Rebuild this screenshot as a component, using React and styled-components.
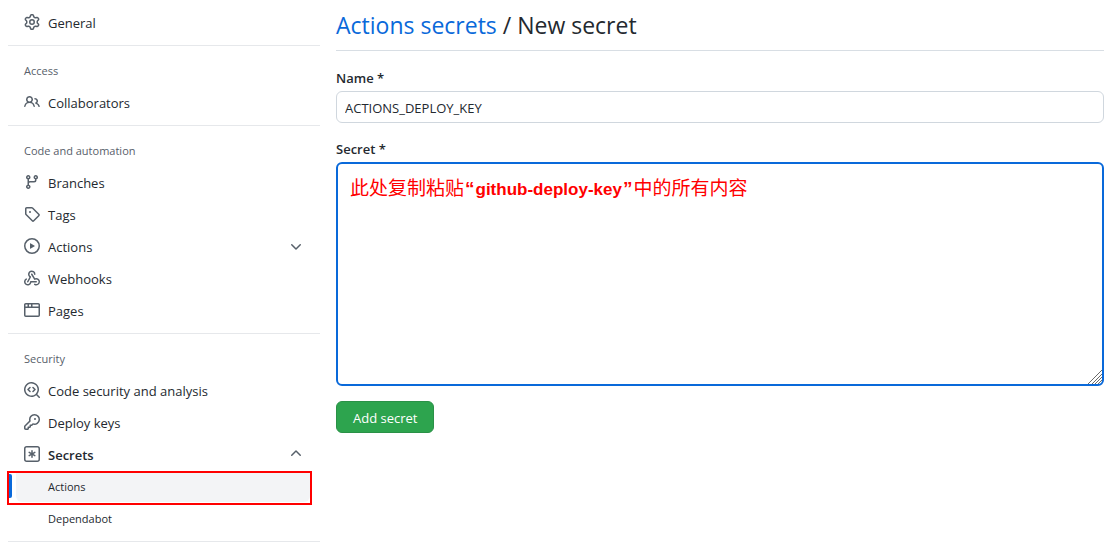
import React from "react";
import styled, { createGlobalStyle, css } from "styled-components";

const Global = createGlobalStyle`
  *, *::before, *::after { box-sizing: border-box; }
  body {
    margin: 0;
    background: #ffffff;
    color: #24292f;
    font-family: "Open Sans", "Noto Sans", "Noto Sans CJK SC", sans-serif;
    font-size: 14px;
    line-height: 20px;
  }
`;

const Page = styled.div`
  display: flex;
  align-items: flex-start;
  gap: 16px;
  padding: 0 10px 0 8px;
`;

const Sidebar = styled.nav`
  flex: 0 0 312px;
  padding-top: 6px;
`;

const Section = styled.section`
  padding-bottom: 7px;
  margin-bottom: 7px;
  border-bottom: 1px solid #e6e8eb;
`;

const SectionTitle = styled.h2`
  margin: 0;
  padding: 9px 16px 6px;
  color: #57606a;
  font-size: 11px;
  font-weight: 500;
  line-height: 18px;
`;

const List = styled.ul`
  list-style: none;
  margin: 0;
  padding: 0;
`;

const itemStyles = css`
  display: flex;
  align-items: center;
  gap: 8px;
  width: 304px;
  height: 32px;
  padding: 0 8px 0 16px;
  color: #24292f;
  font-family: inherit;
  font-size: 13px;
  font-weight: ${(p) => (p.$strong ? 600 : 400)};
  line-height: 20px;
  text-decoration: none;
  text-align: left;
`;

const NavLink = styled.a`
  ${itemStyles}
`;

const NavToggle = styled.button`
  ${itemStyles}
  border: 0;
  background: none;
  cursor: pointer;
`;

const ItemLabel = styled.span`
  flex: 1;
  padding-top: 2px;
`;

const SubLink = styled.a`
  display: flex;
  align-items: center;
  height: 32px;
  width: 304px;
  padding: 1px 0 0 40px;
  color: #24292f;
  font-size: 11px;
  text-decoration: none;
`;

const CurrentFrame = styled.li`
  display: flex;
  width: 305px;
  height: 34px;
  margin: 1px 0 -3px -1px;
  border: 2px solid #ff0000;
`;

const CurrentMarker = styled.span`
  width: 3px;
  height: 24px;
  margin: 1px 4px 0 0;
  background: #0969da;
  border-radius: 0 2px 2px 0;
`;

const CurrentLink = styled.a`
  flex: 1;
  display: flex;
  align-items: center;
  height: 29px;
  padding: 0 0 2px 32px;
  border-radius: 0 0 6px 6px;
  background: #f3f4f6;
  color: #24292f;
  font-size: 11px;
  text-decoration: none;
`;

const Icon = styled.svg`
  flex: none;
  width: 16px;
  height: 16px;
  fill: #57606a;
`;

const Main = styled.main`
  flex: 1;
  min-width: 0;
`;

const Title = styled.h1`
  margin: 0 0 16px;
  padding: 7px 0;
  border-bottom: 1px solid #d8dee4;
  font-size: 23px;
  font-weight: 400;
  line-height: 36px;
`;

const TitleLink = styled.a`
  color: #0969da;
  text-decoration: none;
`;

const Form = styled.form`
  display: flex;
  flex-direction: column;
  align-items: flex-start;
  gap: 15px;
`;

const Field = styled.div`
  display: flex;
  flex-direction: column;
  width: 100%;
`;

const Label = styled.label`
  padding: 1px 0 2px;
  line-height: 21px;
  font-size: 13px;
  font-weight: 600;
`;

const NameInput = styled.input`
  height: 32px;
  padding: 2px 8px 0;
  border: 1px solid #d0d7de;
  border-radius: 6px;
  outline: 0;
  color: #24292f;
  font-family: inherit;
  font-size: 13px;
`;

const AreaWrap = styled.div`
  position: relative;
`;

const SecretArea = styled.textarea`
  display: block;
  width: 100%;
  height: 224px;
  padding: 12px;
  border: 2px solid #0969da;
  border-radius: 6px;
  outline: 0;
  resize: none;
  color: #24292f;
  font-family: inherit;
  font-size: 13px;
`;

const Annotation = styled.p`
  position: absolute;
  top: 11px;
  left: 14px;
  margin: 0;
  color: #ff0000;
  font-family: "Noto Sans CJK SC", sans-serif;
  font-size: 19px;
  line-height: 28px;
  white-space: nowrap;
  pointer-events: none;
`;

const Quote = styled.span`
  font-family: "Liberation Sans", sans-serif;
  font-weight: 700;
  padding: 0 1px;
`;

const FileName = styled.strong`
  font-family: "Liberation Sans", sans-serif;
  font-size: 17px;
`;

const Grip = styled.svg`
  position: absolute;
  right: 2px;
  bottom: 2px;
  width: 15px;
  height: 15px;
  stroke: #6b6b6b;
  pointer-events: none;
`;

const SubmitButton = styled.button`
  height: 32px;
  padding: 1px 16px 0;
  border: 1px solid #2a9147;
  border-radius: 6px;
  background: #2da44e;
  color: #ffffff;
  font-family: inherit;
  font-size: 13px;
  cursor: pointer;
`;

const icons = {
  gear: "M7.429 1.525a6.593 6.593 0 011.142 0c.036.003.108.036.137.146l.289 1.105c.147.56.55.967.997 1.189.174.086.341.183.501.29.417.278.97.423 1.53.27l1.102-.303c.11-.03.175.016.195.046.219.31.41.641.573.989.014.031.022.11-.059.19l-.815.806c-.411.406-.562.957-.53 1.456a4.588 4.588 0 010 .582c-.032.499.119 1.05.53 1.456l.815.806c.08.08.073.159.059.19a6.494 6.494 0 01-.573.99c-.02.029-.086.074-.195.045l-1.103-.303c-.559-.153-1.112-.008-1.529.27-.16.107-.327.204-.5.29-.449.222-.851.628-.998 1.189l-.289 1.105c-.029.11-.101.143-.137.146a6.613 6.613 0 01-1.142 0c-.036-.003-.108-.037-.137-.146l-.289-1.105c-.147-.56-.55-.967-.997-1.189a4.502 4.502 0 01-.501-.29c-.417-.278-.97-.423-1.53-.27l-1.102.303c-.11.03-.175-.016-.195-.046a6.492 6.492 0 01-.573-.989c-.014-.031-.022-.11.059-.19l.815-.806c.411-.406.562-.957.53-1.456a4.587 4.587 0 010-.582c.032-.499-.119-1.05-.53-1.456l-.815-.806c-.08-.08-.073-.159-.059-.19a6.44 6.44 0 01.573-.99c.02-.029.086-.075.195-.045l1.103.303c.559.153 1.112.008 1.529-.27.16-.107.327-.204.5-.29.449-.222.851-.628.998-1.189l.289-1.105c.029-.11.101-.143.137-.146zM8 0c-.236 0-.47.01-.701.03-.743.065-1.29.615-1.458 1.261l-.29 1.106c-.017.066-.078.158-.211.224a5.994 5.994 0 00-.668.386c-.123.082-.233.09-.3.071L3.27 2.776c-.644-.177-1.392.02-1.82.63a7.977 7.977 0 00-.704 1.217c-.315.675-.111 1.422.363 1.891l.815.806c.05.048.098.147.088.294a6.084 6.084 0 000 .772c.01.147-.038.246-.088.294l-.815.806c-.474.469-.678 1.216-.363 1.891.2.428.436.835.704 1.218.428.609 1.176.806 1.82.63l1.103-.303c.066-.019.176-.011.299.071.213.143.436.272.668.386.133.066.194.158.212.224l.289 1.106c.169.646.715 1.196 1.458 1.26a8.094 8.094 0 001.402 0c.743-.064 1.29-.614 1.458-1.26l.29-1.106c.017-.066.078-.158.211-.224a5.98 5.98 0 00.668-.386c.123-.082.233-.09.3-.071l1.102.302c.644.177 1.392-.02 1.82-.63.268-.382.505-.789.704-1.217.315-.675.111-1.422-.364-1.891l-.814-.806c-.05-.048-.098-.147-.088-.294a6.1 6.1 0 000-.772c-.01-.147.039-.246.088-.294l.814-.806c.475-.469.679-1.216.364-1.891a7.992 7.992 0 00-.704-1.218c-.428-.609-1.176-.806-1.82-.63l-1.103.303c-.066.019-.176.011-.299-.071a5.991 5.991 0 00-.668-.386c-.133-.066-.194-.158-.212-.224L10.16 1.29C9.99.645 9.444.095 8.701.031A8.094 8.094 0 008 0zm1.5 8a1.5 1.5 0 11-3 0 1.5 1.5 0 013 0zM11 8a3 3 0 11-6 0 3 3 0 016 0z",
  people: "M5.5 3.5a2 2 0 100 4 2 2 0 000-4zM2 5.5a3.5 3.5 0 115.898 2.549 5.507 5.507 0 013.034 4.084.75.75 0 11-1.482.235 4.001 4.001 0 00-7.9 0 .75.75 0 01-1.482-.236A5.507 5.507 0 013.102 8.05 3.49 3.49 0 012 5.5zM11 4a.75.75 0 100 1.5 1.5 1.5 0 01.666 2.844.75.75 0 00-.416.672v.352a.75.75 0 00.574.73c1.2.289 2.162 1.2 2.522 2.372a.75.75 0 101.434-.44 5.01 5.01 0 00-2.56-3.012A3 3 0 0011 4z",
  branch: "M11.75 2.5a.75.75 0 100 1.5.75.75 0 000-1.5zm-2.25.75a2.25 2.25 0 113 2.122V6A2.5 2.5 0 0110 8.5H6a1 1 0 00-1 1v1.128a2.251 2.251 0 11-1.5 0V5.372a2.25 2.25 0 111.5 0v1.836A2.492 2.492 0 016 7h4a1 1 0 001-1v-.628A2.25 2.25 0 019.5 3.25zM4.25 12a.75.75 0 100 1.5.75.75 0 000-1.5zM3.5 3.25a.75.75 0 111.5 0 .75.75 0 01-1.5 0z",
  tag: "M2.5 7.775V2.75a.25.25 0 01.25-.25h5.025a.25.25 0 01.177.073l6.25 6.25a.25.25 0 010 .354l-5.025 5.025a.25.25 0 01-.354 0l-6.25-6.25a.25.25 0 01-.073-.177zm-1.5 0V2.75C1 1.784 1.784 1 2.75 1h5.025c.464 0 .91.184 1.238.513l6.25 6.25a1.75 1.75 0 010 2.474l-5.026 5.026a1.75 1.75 0 01-2.474 0l-6.25-6.25A1.75 1.75 0 011 7.775zM6 5a1 1 0 100 2 1 1 0 000-2z",
  play: "M1.5 8a6.5 6.5 0 1113 0 6.5 6.5 0 01-13 0zM8 0a8 8 0 100 16A8 8 0 008 0zM6.379 5.227A.25.25 0 006 5.442v5.117a.25.25 0 00.379.214l4.264-2.559a.25.25 0 000-.428L6.379 5.227z",
  webhook: "M5.5 4.25a2.25 2.25 0 014.5 0 .75.75 0 001.5 0 3.75 3.75 0 10-6.14 2.889l-2.272 4.258a.75.75 0 001.324.706L7 7.25a.75.75 0 00-.309-1.015A2.25 2.25 0 015.5 4.25zM7.364 3.607a.75.75 0 011.03.257l2.608 4.349a3.75 3.75 0 11-.628 6.785.75.75 0 01.752-1.299 2.25 2.25 0 10-.033-3.88.75.75 0 01-1.03-.256L7.107 4.636a.75.75 0 01.257-1.03zM2.9 8.776A.75.75 0 012.625 9.8 2.25 2.25 0 106 11.75a.75.75 0 01.75-.751h5.5a.75.75 0 010 1.5H7.425a3.751 3.751 0 11-5.55-3.998.75.75 0 011.024.274z",
  browser: "M0 2.75C0 1.784.784 1 1.75 1h12.5c.966 0 1.75.784 1.75 1.75v10.5A1.75 1.75 0 0114.25 15H1.75A1.75 1.75 0 010 13.25V2.75zm1.75-.25a.25.25 0 00-.25.25V4.5h2v-2H1.75zM5 2.5v2h2v-2H5zm3.5 0v2h6V2.75a.25.25 0 00-.25-.25H8.5zm6 3.5h-13v7.25c0 .138.112.25.25.25h12.5a.25.25 0 00.25-.25V6z",
  codescan: "M8.47 4.97a.75.75 0 000 1.06L9.94 7.5 8.47 8.97a.75.75 0 101.06 1.06l2-2a.75.75 0 000-1.06l-2-2a.75.75 0 00-1.06 0zM6.53 6.03a.75.75 0 00-1.06-1.06l-2 2a.75.75 0 000 1.06l2 2a.75.75 0 101.06-1.06L5.06 7.5l1.47-1.47zM12.246 13.307a7.5 7.5 0 111.06-1.06l2.474 2.473a.75.75 0 11-1.06 1.06l-2.474-2.473zM1.5 7.5a6 6 0 1110.386 4.094.75.75 0 00-.292.293A6 6 0 011.5 7.5z",
  key: "M6.5 5.5a4 4 0 112.731 3.795.75.75 0 00-.768.18L7.44 10.5H6.25a.75.75 0 00-.75.75v1.19l-.06.06H4.25a.75.75 0 00-.75.75v1.19l-.06.06H1.75a.25.25 0 01-.25-.25v-1.69l5.024-5.023a.75.75 0 00.181-.768A3.995 3.995 0 016.5 5.5zm4-5.5a5.5 5.5 0 00-5.348 6.788L.22 11.72a.75.75 0 00-.22.53v2C0 15.216.784 16 1.75 16h2a.75.75 0 00.53-.22l.5-.5a.75.75 0 00.22-.53V14h.75a.75.75 0 00.53-.22l.5-.5a.75.75 0 00.22-.53V12h.75a.75.75 0 00.53-.22l.932-.932A5.5 5.5 0 1010.5 0zm.5 6a1 1 0 100-2 1 1 0 000 2z",
  asterisk: "M0 2.75A2.75 2.75 0 012.75 0h10.5A2.75 2.75 0 0116 2.75v10.5A2.75 2.75 0 0113.25 16H2.75A2.75 2.75 0 010 13.25V2.75zM2.75 1.5c-.69 0-1.25.56-1.25 1.25v10.5c0 .69.56 1.25 1.25 1.25h10.5c.69 0 1.25-.56 1.25-1.25V2.75c0-.69-.56-1.25-1.25-1.25H2.75zM8 4a.75.75 0 01.75.75V6.7l1.69-.975a.75.75 0 01.75 1.3L9.5 8l1.69.976a.75.75 0 01-.75 1.298L8.75 9.3v1.951a.75.75 0 01-1.5 0V9.299l-1.69.976a.75.75 0 01-.75-1.3L6.5 8l-1.69-.975a.75.75 0 01.75-1.3l1.69.976V4.75A.75.75 0 018 4z",
  down: "M12.78 6.22a.75.75 0 010 1.06l-4.25 4.25a.75.75 0 01-1.06 0L3.22 7.28a.75.75 0 011.06-1.06L8 9.94l3.72-3.72a.75.75 0 011.06 0z",
  up: "M3.22 9.78a.75.75 0 010-1.06l4.25-4.25a.75.75 0 011.06 0l4.25 4.25a.75.75 0 01-1.06 1.06L8 6.06 4.28 9.78a.75.75 0 01-1.06 0z",
};

const Glyph = ({ name }) => (
  <Icon viewBox="0 0 16 16" aria-hidden="true">
    <path fillRule="evenodd" d={icons[name]} />
  </Icon>
);

const Item = ({ icon, children }) => (
  <li>
    <NavLink href="#">
      <Glyph name={icon} />
      <ItemLabel>{children}</ItemLabel>
    </NavLink>
  </li>
);

const ToggleItem = ({ icon, open, children }) => (
  <li>
    <NavToggle type="button" aria-expanded={open} $strong={open}>
      <Glyph name={icon} />
      <ItemLabel>{children}</ItemLabel>
      <Glyph name={open ? "up" : "down"} />
    </NavToggle>
  </li>
);

export default function App() {
  return (
    <>
      <Global />
      <Page>
        <Sidebar>
          <Section>
            <List>
              <Item icon="gear">General</Item>
            </List>
          </Section>
          <Section>
            <SectionTitle>Access</SectionTitle>
            <List>
              <Item icon="people">Collaborators</Item>
            </List>
          </Section>
          <Section>
            <SectionTitle>Code and automation</SectionTitle>
            <List>
              <Item icon="branch">Branches</Item>
              <Item icon="tag">Tags</Item>
              <ToggleItem icon="play" open={false}>Actions</ToggleItem>
              <Item icon="webhook">Webhooks</Item>
              <Item icon="browser">Pages</Item>
            </List>
          </Section>
          <Section>
            <SectionTitle>Security</SectionTitle>
            <List>
              <Item icon="codescan">Code security and analysis</Item>
              <Item icon="key">Deploy keys</Item>
              <ToggleItem icon="asterisk" open>Secrets</ToggleItem>
              <CurrentFrame>
                <CurrentMarker />
                <CurrentLink href="#" aria-current="page">Actions</CurrentLink>
              </CurrentFrame>
              <li>
                <SubLink href="#">Dependabot</SubLink>
              </li>
            </List>
          </Section>
        </Sidebar>
        <Main>
          <Title>
            <TitleLink href="#">Actions secrets</TitleLink> / New secret
          </Title>
          <Form>
            <Field>
              <Label htmlFor="secret-name">Name *</Label>
              <NameInput id="secret-name" defaultValue="ACTIONS_DEPLOY_KEY" />
            </Field>
            <Field>
              <Label htmlFor="secret-value">Secret *</Label>
              <AreaWrap>
                <SecretArea id="secret-value" />
                <Annotation>
                  此处复制粘贴<Quote>“</Quote>
                  <FileName>github-deploy-key</FileName>
                  <Quote>”</Quote>中的所有内容
                </Annotation>
                <Grip viewBox="0 0 15 15" aria-hidden="true">
                  <path d="M1 15L15 1M5 15L15 5M8 15L15 8M11 15L15 11" />
                </Grip>
              </AreaWrap>
            </Field>
            <SubmitButton type="button">Add secret</SubmitButton>
          </Form>
        </Main>
      </Page>
    </>
  );
}
